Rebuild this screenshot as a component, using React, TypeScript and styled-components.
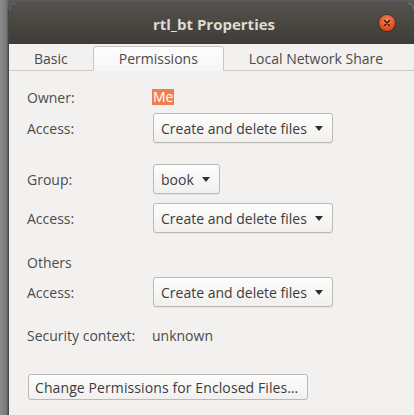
import { FC } from "react";
import styled, { createGlobalStyle } from "styled-components";

const GlobalStyle = createGlobalStyle`
  html, body {
    margin: 0;
    padding: 0;
    width: 414px;
    height: 415px;
    overflow: hidden;
  }
  body {
    font-family: "Open Sans", "Noto Sans", "DejaVu Sans", sans-serif;
    font-size: 14px;
    color: #3c3c3c;
  }
`;

const Desktop = styled.div`
  width: 414px;
  height: 415px;
  padding-top: 3px;
  box-sizing: border-box;
  background: linear-gradient(to right, #8c8c8c 0px, #7a7a7a 6px, #5a5a5a 9px);
  display: flex;
  flex-direction: column;
  overflow: hidden;
`;

const Window = styled.div`
  margin-left: 9px;
  flex: 1;
  display: flex;
  flex-direction: column;
  border-radius: 7px 7px 0 0;
  overflow: hidden;
  background: #f2f1f0;
  box-shadow: -1px 0 2px rgba(0, 0, 0, 0.35);
`;

const TitleBar = styled.div`
  height: 41px;
  position: relative;
  display: flex;
  align-items: center;
  justify-content: center;
  background: linear-gradient(to bottom, #55524c, #3d3c38);
`;

const Title = styled.span`
  font-family: "Open Sans", "DejaVu Sans", sans-serif;
  font-weight: 700;
  font-size: 15px;
  color: #dfdbd2;
  margin-left: 5px;
`;

const CloseButton = styled.div`
  position: absolute;
  right: 19px;
  top: 12px;
  width: 16px;
  height: 16px;
  border-radius: 50%;
  background: radial-gradient(circle at 50% 35%, #f58a5c, #e2511f 60%, #c8421a);
  box-shadow: 0 0 0 1px rgba(60, 20, 5, 0.45);
  display: flex;
  align-items: center;
  justify-content: center;
`;

const TabBar = styled.div`
  height: 26px;
  display: flex;
  align-items: flex-end;
  background: #f2f1f0;
  border-bottom: 1px solid #cdc9c3;
`;

const Tab = styled.div<{ active?: boolean }>`
  height: ${({ active }) => (active ? "25px" : "26px")};
  box-sizing: border-box;
  padding: 0 ${({ active }) => (active ? "25px" : "24px")};
  display: flex;
  align-items: center;
  white-space: nowrap;
  color: #4a4a4a;
  margin-bottom: -1px;
  border: 1px solid ${({ active }) => (active ? "#c9c5bf" : "transparent")};
  border-bottom: ${({ active }) => (active ? "1px solid #f6f6f6" : "none")};
  border-radius: 4px 4px 0 0;
  background: ${({ active }) =>
    active ? "linear-gradient(to bottom, #fdfdfd, #f6f6f6)" : "transparent"};
`;

const Content = styled.div`
  padding: 16px 0 0 18px;
  display: flex;
  flex-direction: column;
`;

const Row = styled.div<{ top: number }>`
  display: grid;
  grid-template-columns: 125px auto;
  align-items: center;
  justify-items: start;
  margin-top: ${({ top }) => top}px;
  min-height: 20px;
`;

const Label = styled.span`
  color: #4c4c4c;
  white-space: nowrap;
`;

const Highlight = styled.span`
  background: #f07f50;
  color: #ffffff;
  padding: 0 1px;
  line-height: 16px;
`;

const Value = styled.span`
  color: #4a4a4a;
`;

const Combo = styled.div`
  margin-left: 1px;
  height: 30px;
  box-sizing: border-box;
  padding: 0 9px 0 7px;
  display: flex;
  align-items: center;
  gap: 8px;
  border: 1px solid #bcb8b2;
  border-radius: 3px;
  background: linear-gradient(to bottom, #fdfdfd, #f1f0ef);
  box-shadow: 0 1px 0 rgba(0, 0, 0, 0.05);
  color: #3c3c3c;
  white-space: nowrap;
`;

const Arrow = styled.span`
  width: 0;
  height: 0;
  border-left: 4.5px solid transparent;
  border-right: 4.5px solid transparent;
  border-top: 5px solid #2e2e2e;
`;

const Button = styled.div`
  margin-top: 29px;
  margin-left: 1px;
  align-self: flex-start;
  height: 26px;
  box-sizing: border-box;
  padding: 0 9px 0 6px;
  display: flex;
  align-items: center;
  border: 1px solid #bcb8b2;
  border-radius: 3px;
  background: linear-gradient(to bottom, #fdfdfd, #f1f0ef);
  color: #3c3c3c;
  white-space: nowrap;
  letter-spacing: 0.1px;
`;

const ComboBox: FC<{ text: string }> = ({ text }) => (
  <Combo>
    {text}
    <Arrow />
  </Combo>
);

const App: FC = () => {
  return (
    <>
      <GlobalStyle />
      <Desktop>
        <Window>
          <TitleBar>
            <Title>rtl_bt Properties</Title>
            <CloseButton>
              <svg width="8" height="8" viewBox="0 0 8 8">
                <path
                  d="M1.5 1.5 L6.5 6.5 M6.5 1.5 L1.5 6.5"
                  stroke="#3b1608"
                  strokeWidth="1.4"
                  strokeLinecap="round"
                />
              </svg>
            </CloseButton>
          </TitleBar>
          <TabBar>
            <Tab>Basic</Tab>
            <Tab active>Permissions</Tab>
            <Tab>Local Network Share</Tab>
          </TabBar>
          <Content>
            <Row top={0}>
              <Label>Owner:</Label>
              <Highlight>Me</Highlight>
            </Row>
            <Row top={6}>
              <Label>Access:</Label>
              <ComboBox text="Create and delete files" />
            </Row>
            <Row top={21}>
              <Label>Group:</Label>
              <ComboBox text="book" />
            </Row>
            <Row top={9}>
              <Label>Access:</Label>
              <ComboBox text="Create and delete files" />
            </Row>
            <Row top={19}>
              <Label>Others</Label>
            </Row>
            <Row top={5}>
              <Label>Access:</Label>
              <ComboBox text="Create and delete files" />
            </Row>
            <Row top={18}>
              <Label>Security context:</Label>
              <Value>unknown</Value>
            </Row>
            <Button>Change Permissions for Enclosed Files…</Button>
          </Content>
        </Window>
      </Desktop>
    </>
  );
};

export default App;
